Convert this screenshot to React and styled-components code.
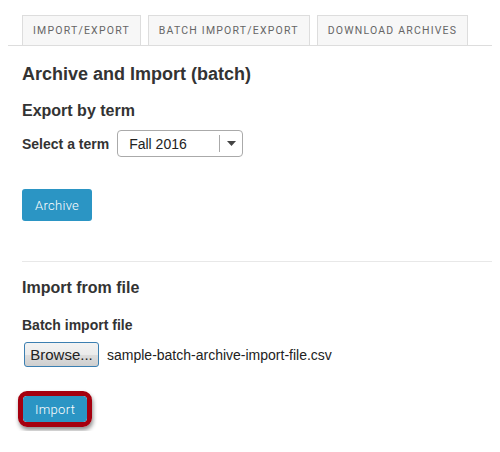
import React from 'react'
import styled, { createGlobalStyle } from 'styled-components'

const GlobalStyle = createGlobalStyle`
  body {
    margin: 8px;
    background: #fff;
    font-family: "Liberation Sans", Arial, sans-serif;
    color: #333;
  }
`

const tabs = ['Import/Export', 'Batch Import/Export', 'Download Archives']

const App = () => {
  return (
    <>
      <GlobalStyle />
      <Page>
        <TabBar>
          {tabs.map(t => (
            <Tab key={t}>{t}</Tab>
          ))}
        </TabBar>

        <Content>
          <Title>Archive and Import (batch)</Title>
          <SubTitle>Export by term</SubTitle>
          <FieldRow>
            <Label>Select a term</Label>
            <Select>
              <span className="value">Fall 2016</span>
              <span className="arrow">
                <svg width="9" height="5" viewBox="0 0 9 5">
                  <path d="M0 0 L9 0 L4.5 5 Z" fill="#444" />
                </svg>
              </span>
            </Select>
          </FieldRow>
          <ActionRow $top={32}>
            <PrimaryButton>Archive</PrimaryButton>
          </ActionRow>

          <Divider />

          <SubTitle>Import from file</SubTitle>
          <FieldLabel>Batch import file</FieldLabel>
          <FileRow>
            <BrowseButton>Browse...</BrowseButton>
            <FileName>sample-batch-archive-import-file.csv</FileName>
          </FileRow>
          <Highlight>
            <PrimaryButton $small>Import</PrimaryButton>
          </Highlight>
        </Content>
      </Page>
    </>
  )
}

const Page = styled.div`
  width: 492px;
`

const TabBar = styled.ul`
  list-style: none;
  margin: 7px 0 0 0;
  padding: 0 0 0 14px;
  display: flex;
  gap: 7px;
  border-bottom: 1px solid #ddd;
`

const Tab = styled.li`
  height: 29px;
  padding: 0 10px;
  display: flex;
  align-items: center;
  background: #f7f7f7;
  border: 1px solid #ddd;
  border-bottom: none;
  font-family: Roboto, "Liberation Sans", sans-serif;
  font-size: 10.5px;
  letter-spacing: 1.2px;
  text-transform: uppercase;
  color: #666;
`

const Content = styled.div`
  padding: 0 0 0 14px;
`

const Title = styled.h1`
  margin: 17px 0 0 0;
  font-size: 18px;
  line-height: 22px;
  font-weight: bold;
  color: #333;
`

const SubTitle = styled.h2`
  margin: 16px 0 0 0;
  font-size: 16px;
  line-height: 20px;
  font-weight: bold;
  color: #333;
`

const FieldRow = styled.div`
  display: flex;
  align-items: center;
  gap: 8px;
  margin-top: 9px;
`

const Label = styled.label`
  font-size: 14px;
  font-weight: bold;
  color: #333;
`

const Select = styled.div`
  width: 124px;
  height: 25px;
  border: 1px solid #aaa;
  border-radius: 4px;
  display: flex;
  align-items: center;
  box-sizing: content-box;
  font-size: 14px;
  color: #222;

  .value {
    flex: 1;
    padding-left: 11px;
  }
  .arrow {
    width: 22px;
    height: 17px;
    border-left: 1px solid #aaa;
    display: flex;
    align-items: center;
    justify-content: center;
  }
`

const ActionRow = styled.div`
  margin-top: ${p => p.$top}px;
`

const PrimaryButton = styled.button`
  height: ${p => (p.$small ? 26 : 32)}px;
  padding: 0 ${p => (p.$small ? 12 : 13)}px;
  border: none;
  border-radius: 3px;
  background: #2b95c4;
  color: #fff;
  font-family: Roboto, "Liberation Sans", sans-serif;
  font-weight: 300;
  font-size: 13px;
  letter-spacing: 0.3px;
  cursor: pointer;
`

const Divider = styled.hr`
  margin: 40px 0 0 0;
  border: none;
  border-top: 1px solid #e8e8e8;
`

const FieldLabel = styled.div`
  margin-top: 19px;
  font-size: 14px;
  font-weight: bold;
  color: #333;
`

const FileRow = styled.div`
  display: flex;
  align-items: center;
  gap: 8px;
  margin-top: 9px;
  padding-left: 2px;
`

const BrowseButton = styled.button`
  width: 75px;
  height: 25px;
  border: 1px solid #3c7fb1;
  border-radius: 3px;
  background: linear-gradient(#f3f3f3 0%, #ebebeb 50%, #dddddd 51%, #cfcfcf 100%);
  font-family: "Liberation Sans", Arial, sans-serif;
  font-size: 15px;
  color: #222;
  padding: 0;
`

const FileName = styled.span`
  font-size: 14px;
  color: #222;
`

const Highlight = styled.div`
  display: inline-block;
  margin: 24px 0 0 -4px;
  border: 5px solid #a5000f;
  border-radius: 9px;
  box-shadow: 1px 3px 4px rgba(0, 0, 0, 0.45);
  line-height: 0;
  overflow: hidden;
`

export default App
